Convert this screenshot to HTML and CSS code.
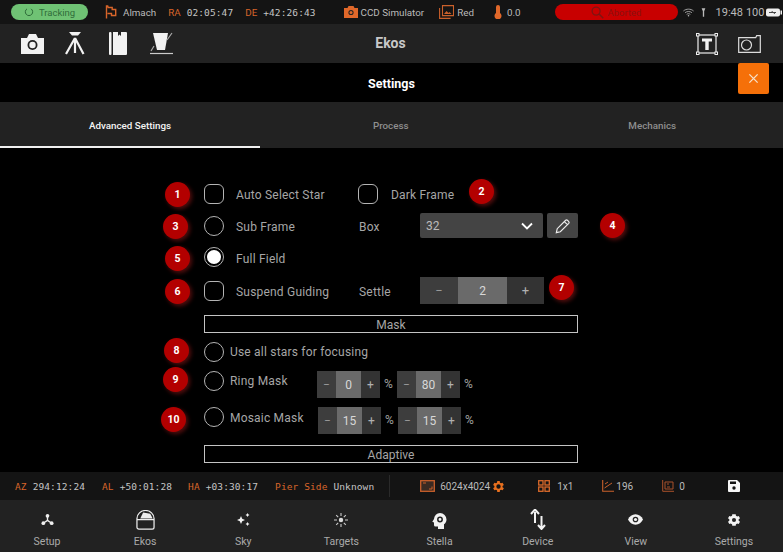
FILE: index.html
```html
<!DOCTYPE html>
<html lang="en">
	<head>
		<meta charset="UTF-8">
		<title>Ekos Settings</title>
		<link rel="stylesheet" href="styles.css">
	</head>
	<body>
		<div class="status-bar">
			<div class="pill pill-green">
				<svg class="pill-icon" viewBox="0 0 12 12"><path d="M3.600 2.200a4.400 4.400 0 1 0 4.800 0" fill="none" stroke="#2d6b38" stroke-width="1.200"/></svg>
				<span>Tracking</span>
			</div>
			<svg class="flag-icon" viewBox="0 0 12 14"><path d="M1.500 13.500V1h1.200l.5 1.500h4v2h3.500v6H6.500v-2H2.500" fill="none" stroke="#d8652a" stroke-width="1.400"/></svg>
			<span class="almach">Almach</span>
			<span class="key key-ra">RA</span><span class="mono val-ra">02:05:47</span>
			<span class="key key-de">DE</span><span class="mono">+42:26:43</span>
			<svg class="ccd-icon" viewBox="0 0 14 12"><path d="M0 2h3.500l1-2h5l1 2H14v10H0z" fill="#e0682a"/><circle cx="7" cy="6.500" r="2.600" fill="#222"/><circle cx="7" cy="6.500" r="1.500" fill="#e0682a"/></svg>
			<span class="ccd-name">CCD Simulator</span>
			<svg class="filter-icon" viewBox="0 0 15 14"><path d="M.6 3v10.400h11M3.500.6h11v10h-11z" fill="none" stroke="#c9602b" stroke-width="1.100"/><path d="M5 9l2.500-3 2 2 1-1 2 2z" fill="#c9602b"/></svg>
			<span class="filter-name">Red</span>
			<svg class="temp-icon" viewBox="0 0 8 14"><path d="M2 2a2 2 0 0 1 4 0v6a3.500 3.500 0 1 1-4 0z" fill="#e0682a"/></svg>
			<span class="temp">0.0</span>
			<div class="pill pill-red">
				<svg class="search-icon" viewBox="0 0 14 14"><circle cx="5.500" cy="5.500" r="4.300" fill="none" stroke="#7c1512" stroke-width="1.400"/><path d="M8.700 8.700l4.500 4.500" stroke="#7c1512" stroke-width="1.600"/></svg>
				<span>Aborted</span>
			</div>
			<svg class="wifi-icon" viewBox="0 0 12 9"><path d="M.5 2.800c3-2.600 8-2.600 11 0M2.300 4.700c2-1.700 5.400-1.700 7.400 0M4 6.500c1.100-.9 2.900-.9 4 0" fill="none" stroke="#bbb" stroke-width=".9"/><circle cx="6" cy="8" r=".8" fill="#bbb"/></svg>
			<svg class="signal-icon" viewBox="0 0 6 10"><path d="M.8 0h4.400L3.800 3.500V10H2.200V3.500z" fill="#bbb"/></svg>
			<span class="clock">19:48</span>
			<span class="batt-text">100</span>
			<svg class="battery-icon" viewBox="0 0 16 9"><rect width="14" height="8" y=".5" rx="2" fill="#eee"/><rect x="14.500" y="2.500" width="1.500" height="4" fill="#eee"/><path d="M3 4.500h7M6.500 3l-1 1.500M8 6l1-1.500" stroke="#333" stroke-width=".9"/></svg>
		</div>

		<div class="toolbar">
			<div class="toolbar-left">
				<svg class="tool-camera" viewBox="0 0 23 20"><path d="M0 4h6l2-4h7l2 4h6v16H0z" fill="#f2f2f2"/><circle cx="11.500" cy="11" r="5" fill="#222"/><circle cx="11.500" cy="11" r="3.200" fill="#f2f2f2"/></svg>
				<svg class="tool-mount" viewBox="0 0 20 23"><path d="M4 0h12l-3 3.500H7z" fill="#f2f2f2"/><path d="M10 6L1 22M10 6l8.500 16M10 6v15" stroke="#f2f2f2" stroke-width="2.200" fill="none"/></svg>
				<svg class="tool-book" viewBox="0 0 18 23"><rect width="2.500" height="23" rx="1" fill="#f2f2f2"/><path d="M4 0h5v4l1.500-1.500L12 4V0h5a1 1 0 0 1 1 1v21a1 1 0 0 1-1 1H4z" fill="#f2f2f2"/></svg>
				<svg class="tool-focus" viewBox="0 0 23 23"><path d="M3 1h15l-3 17H7z" fill="#f2f2f2"/><path d="M0 21.500h23" stroke="#ccc" stroke-width="1.200"/><path d="M1 19l3-5M17 8l5-7" stroke="#aaa" stroke-width="1.200"/></svg>
			</div>
			<div class="toolbar-title">Ekos</div>
			<div class="toolbar-right">
				<svg class="tool-text" viewBox="0 0 22 22"><rect x="2" y="2" width="18" height="18" fill="none" stroke="#eee" stroke-width="1.200"/><g fill="#222" stroke="#eee"><rect x=".5" y=".5" width="2.500" height="2.500"/><rect x="19" y=".5" width="2.500" height="2.500"/><rect x=".5" y="19" width="2.500" height="2.500"/><rect x="19" y="19" width="2.500" height="2.500"/></g><path d="M6 5.500h10v3h-3.300V17H9.300V8.500H6z" fill="#f2f2f2"/></svg>
				<svg class="tool-frame" viewBox="0 0 23 18"><path d="M.7 2.700h17l1-2h3.600v16.600H.7z" fill="none" stroke="#ddd" stroke-width="1.200"/><circle cx="8.500" cy="10" r="5" fill="none" stroke="#ddd" stroke-width="1.200"/></svg>
			</div>
		</div>

		<div class="settings-head">
			<span>Settings</span>
			<button class="close-btn">
				<svg viewBox="0 0 12 12"><path d="M1.500 1.500l9 9M10.500 1.500l-9 9" stroke="#f5dfc8" stroke-width="1.500"/></svg>
			</button>
		</div>

		<div class="tabs">
			<div class="tab tab-active">Advanced Settings</div>
			<div class="tab">Process</div>
			<div class="tab">Mechanics</div>
		</div>

		<div class="form">
			<div class="badge b1">1</div>
			<div class="badge b2">2</div>
			<div class="badge b3">3</div>
			<div class="badge b4">4</div>
			<div class="badge b5">5</div>
			<div class="badge b6">6</div>
			<div class="badge b7">7</div>
			<div class="badge b8">8</div>
			<div class="badge b9">9</div>
			<div class="badge b10">10</div>

			<div class="row row-1">
				<span class="check"></span>
				<span class="label col-a">Auto Select Star</span>
				<span class="check"></span>
				<span class="label dark-label">Dark Frame</span>
			</div>
			<div class="row row-2">
				<span class="radio"></span>
				<span class="label col-a">Sub Frame</span>
				<span class="label col-b">Box</span>
				<div class="select">
					<span>32</span>
					<svg viewBox="0 0 12 8"><path d="M1 1.500l5 5 5-5" fill="none" stroke="#fff" stroke-width="1.800"/></svg>
				</div>
				<button class="edit-btn">
					<svg viewBox="0 0 18 18"><path d="M1.500 16.500l1-4.500L12 2.500a1.500 1.500 0 0 1 2 0l1.500 1.500a1.500 1.500 0 0 1 0 2L6 15.500zM10.500 4l3.500 3.500" fill="none" stroke="#eee" stroke-width="1.300"/></svg>
				</button>
			</div>
			<div class="row row-3">
				<span class="radio radio-on"></span>
				<span class="label col-a">Full Field</span>
			</div>
			<div class="row row-4">
				<span class="check"></span>
				<span class="label col-a">Suspend Guiding</span>
				<span class="label col-b settle">Settle</span>
				<div class="stepper stepper-lg">
					<span class="step-minus">−</span><span class="step-val">2</span><span class="step-plus">+</span>
				</div>
			</div>

			<div class="section-box mask-box">Mask</div>

			<div class="row row-5">
				<span class="radio"></span>
				<span class="label col-c">Use all stars for focusing</span>
			</div>
			<div class="row row-6">
				<span class="radio"></span>
				<span class="label col-d">Ring Mask</span>
				<div class="stepper">
					<span class="step-minus">−</span><span class="step-val">0</span><span class="step-plus">+</span>
				</div>
				<span class="pct">%</span>
				<div class="stepper">
					<span class="step-minus">−</span><span class="step-val">80</span><span class="step-plus">+</span>
				</div>
				<span class="pct">%</span>
			</div>
			<div class="row row-7">
				<span class="radio"></span>
				<span class="label col-e">Mosaic Mask</span>
				<div class="stepper">
					<span class="step-minus">−</span><span class="step-val">15</span><span class="step-plus">+</span>
				</div>
				<span class="pct">%</span>
				<div class="stepper">
					<span class="step-minus">−</span><span class="step-val">15</span><span class="step-plus">+</span>
				</div>
				<span class="pct">%</span>
			</div>

			<div class="section-box adaptive-box">Adaptive</div>
		</div>

		<div class="info-bar">
			<span class="mono key i-az">AZ</span><span class="mono">294:12:24</span>
			<span class="mono key i-al">AL</span><span class="mono">+50:01:28</span>
			<span class="mono key i-ha">HA</span><span class="mono">+03:30:17</span>
			<span class="mono key i-pier">Pier Side</span><span class="mono">Unknown</span>
			<span class="divider"></span>
			<svg class="i-frame" viewBox="0 0 15 12"><rect x=".7" y=".7" width="13.600" height="10.600" fill="#3a2a22" stroke="#c9602b" stroke-width="1.300"/><path d="M9 9h3V6.500M3 3h3" stroke="#c9602b" fill="none"/></svg>
			<span class="i-size">6024x4024</span>
			<svg class="i-gear" viewBox="0 0 24 24"><path d="M19.400 13a7.500 7.500 0 0 0 0-2l2.100-1.600-2-3.500-2.500 1a7.500 7.500 0 0 0-1.700-1L15 3.200h-4l-.4 2.700a7.500 7.500 0 0 0-1.700 1l-2.500-1-2 3.500L6.500 11a7.500 7.500 0 0 0 0 2l-2.100 1.600 2 3.500 2.500-1a7.500 7.500 0 0 0 1.700 1l.4 2.700h4l.4-2.700a7.500 7.500 0 0 0 1.700-1l2.500 1 2-3.500zM13 15.500a3.500 3.500 0 1 1 0-7 3.500 3.500 0 0 1 0 7z" fill="#e8701f" transform="translate(-1 0)"/></svg>
			<svg class="i-bin" viewBox="0 0 12 12"><g fill="none" stroke="#d9692a" stroke-width="1.300"><rect x=".7" y=".7" width="4.300" height="4.300"/><rect x="7" y=".7" width="4.300" height="4.300"/><rect x=".7" y="7" width="4.300" height="4.300"/><rect x="7" y="7" width="4.300" height="4.300"/></g></svg>
			<span class="i-bin-text">1x1</span>
			<svg class="i-hfr" viewBox="0 0 12 12"><path d="M.7 0v11.300H12" fill="none" stroke="#c9602b" stroke-width="1.100"/><path d="M2.500 8L10 3M3 4l3-2" stroke="#c9602b"/></svg>
			<span class="i-hfr-text">196</span>
			<svg class="i-stars" viewBox="0 0 12 12"><path d="M.7 0v11.300H12M3 2h8v7H3z" fill="none" stroke="#a8502a"/><path d="M5 4h2M5 7h3" stroke="#a8502a"/></svg>
			<span class="i-stars-text">0</span>
			<svg class="i-save" viewBox="0 0 12 12"><path d="M0 1a1 1 0 0 1 1-1h8l3 3v8a1 1 0 0 1-1 1H1a1 1 0 0 1-1-1z" fill="#f5f5f5"/><rect x="2" y="1.500" width="6" height="2.500" fill="#111"/><circle cx="6" cy="8" r="1.700" fill="#111"/></svg>
		</div>

		<div class="nav">
			<div class="nav-item">
				<svg class="n-setup" viewBox="0 0 14 14"><circle cx="7" cy="3" r="2" fill="#eee"/><circle cx="2.500" cy="11" r="2" fill="#eee"/><circle cx="11.500" cy="11" r="2" fill="#eee"/><path d="M7 3v5l-4.500 3M7 8l4.500 3" stroke="#eee" stroke-width="1.500" fill="none"/></svg>
				<span>Setup</span>
			</div>
			<div class="nav-item">
				<svg class="n-ekos" viewBox="0 0 20 21"><path d="M1 10V9a9 8.500 0 0 1 18 0v1M1 10h18v8a2 2 0 0 1-2 2H3a2 2 0 0 1-2-2z" fill="none" stroke="#eee" stroke-width="1.300"/><path d="M4.500 9l3-6.500 7.500 1.500 2.500 5z" fill="#eee"/></svg>
				<span>Ekos</span>
			</div>
			<div class="nav-item">
				<svg class="n-sky" viewBox="0 0 15 13"><path d="M5 3l1.200 2.800L9 7 6.200 8.200 5 11 3.800 8.200 1 7l2.800-1.200zM11.500 0l.7 1.300 1.300.7-1.300.7-.7 1.300-.7-1.300L9.500 2l1.300-.7zM11.500 9l.7 1.300 1.300.7-1.300.7-.7 1.300-.7-1.300-1.300-.7 1.300-.7z" fill="#f2f2f2"/></svg>
				<span>Sky</span>
			</div>
			<div class="nav-item">
				<svg class="n-targets" viewBox="0 0 14 14"><circle cx="7" cy="7" r="2.200" fill="#ddd"/><path d="M7 0v3M7 11v3M0 7h3M11 7h3M2.200 2.200l2 2M9.800 9.800l2 2M11.800 2.200l-2 2M4.200 9.800l-2 2" stroke="#ccc" stroke-width="1.100"/></svg>
				<span>Targets</span>
			</div>
			<div class="nav-item">
				<svg class="n-stella" viewBox="0 0 15 16"><path d="M8 0a6.500 6.500 0 0 1 6.500 6.500c0 2.200-1 3.700-2.500 4.800V16H6v-2.500H3.500a1.500 1.500 0 0 1-1.500-1.500V9.500L.3 8.700 2 6A6.300 6.300 0 0 1 8 0z" fill="#f2f2f2"/><circle cx="8" cy="6.500" r="2.200" fill="none" stroke="#222" stroke-width="1.500"/></svg>
				<span>Stella</span>
			</div>
			<div class="nav-item">
				<svg class="n-device" viewBox="0 0 16 21"><path d="M5 14V3M1 5l4-4.500L9 5" fill="none" stroke="#f2f2f2" stroke-width="2"/><path d="M11.500 7v12M8 16l3.500 4 3.500-4" fill="none" stroke="#f2f2f2" stroke-width="2"/></svg>
				<span>Device</span>
			</div>
			<div class="nav-item">
				<svg class="n-view" viewBox="0 0 16 11"><path d="M8 0c3.600 0 6.500 2.300 8 5.500C14.500 8.700 11.600 11 8 11S1.500 8.700 0 5.500C1.500 2.300 4.400 0 8 0z" fill="#f2f2f2"/><circle cx="8" cy="5.500" r="3" fill="#222"/><circle cx="8" cy="5.500" r="1.700" fill="#f2f2f2"/></svg>
				<span>View</span>
			</div>
			<div class="nav-item">
				<svg class="n-settings" viewBox="0 0 24 24"><path d="M20 13.200a8 8 0 0 0 0-2.400l2.300-1.800-2.300-4-2.700 1.100a8 8 0 0 0-2-1.200L15 2h-6l-.3 2.900a8 8 0 0 0-2 1.200L4 5 1.700 9 4 10.800a8 8 0 0 0 0 2.400L1.700 15 4 19l2.700-1.100a8 8 0 0 0 2 1.200L9 22h6l.3-2.900a8 8 0 0 0 2-1.200L20 19l2.300-4zM12 15.500a3.500 3.500 0 1 1 0-7 3.500 3.500 0 0 1 0 7z" fill="#f2f2f2"/></svg>
				<span>Settings</span>
			</div>
		</div>
	</body>
</html>
```

FILE: styles.css
```css
html, body {
	margin: 0;
	padding: 0;
}

body {
	width: 783px;
	height: 552px;
	overflow: hidden;
	background-color: #000;
	color: #bbb;
	font-family: Roboto, 'Noto Sans', sans-serif;
	font-size: 12px;
}

svg {
	display: block;
	flex: none;
}

button {
	border: none;
	padding: 0;
}

.mono {
	flex: none;
	font-family: 'DejaVu Sans Mono', monospace;
	font-size: 9.5px;
	letter-spacing: 0.1px;
	color: #c4c4c4;
}

.key {
	color: #d8652a;
}

/* top status bar */
.status-bar {
	display: flex;
	align-items: center;
	height: 24px;
	background-color: #141414;
	font-size: 9.8px;
	color: #bbb;
	white-space: nowrap;
}

.pill {
	display: flex;
	flex: none;
	align-items: center;
	justify-content: center;
	height: 16px;
	border-radius: 8px;
}

.pill-green {
	width: 77px;
	margin-left: 11px;
	gap: 5px;
	background-color: #6fc274;
	color: #2f6d3a;
	font-size: 9.5px;
}

.pill-icon {
	width: 10px;
	height: 10px;
}

.flag-icon {
	width: 12px;
	height: 14px;
	margin-left: 17px;
}

.almach {
	margin-left: 6px;
}

.key-ra {
	margin-left: 12px;
	color: #d8652a;
}

.val-ra {
	margin-left: 6px;
}

.key-de {
	margin-left: 12px;
	color: #d8652a;
}

.key-de + .mono {
	margin-left: 6px;
}

.ccd-icon {
	width: 14px;
	height: 12px;
	margin-left: 28px;
}

.ccd-name {
	margin-left: 3px;
}

.filter-icon {
	width: 15px;
	height: 14px;
	margin-left: 15px;
}

.filter-name {
	margin-left: 3px;
}

.temp-icon {
	width: 8px;
	height: 14px;
	margin-left: 20px;
}

.temp {
	margin-left: 5px;
}

.pill-red {
	width: 123px;
	margin-left: 34px;
	gap: 4px;
	background-color: #c80000;
	color: #8a1010;
	font-size: 9.5px;
}

.search-icon {
	width: 13px;
	height: 13px;
}

.wifi-icon {
	width: 11px;
	height: 9px;
	margin-left: 5px;
}

.signal-icon {
	width: 5px;
	height: 9px;
	margin-left: 7px;
}

.clock {
	margin-left: 10px;
	font-size: 11px;
}

.batt-text {
	margin-left: 3px;
	font-size: 11px;
}

.battery-icon {
	width: 16px;
	height: 9px;
	margin-left: 2px;
}

/* ekos toolbar */
.toolbar {
	display: flex;
	align-items: center;
	justify-content: space-between;
	position: relative;
	height: 39px;
	background-color: #222;
}

.toolbar-left {
	display: flex;
	align-items: center;
	margin-left: 21px;
}

.tool-camera {
	width: 23px;
	height: 20px;
}

.tool-mount {
	width: 20px;
	height: 23px;
	margin-left: 21px;
}

.tool-book {
	width: 18px;
	height: 23px;
	margin-left: 24px;
}

.tool-focus {
	width: 23px;
	height: 23px;
	margin-left: 23px;
}

.toolbar-title {
	position: absolute;
	left: 0;
	right: 2px;
	bottom: 12px;
	text-align: center;
	font-size: 14px;
	font-weight: 700;
	color: #c8c8c8;
}

.toolbar-right {
	display: flex;
	align-items: center;
	margin-right: 22px;
}

.tool-text {
	width: 22px;
	height: 22px;
}

.tool-frame {
	width: 23px;
	height: 18px;
	margin-left: 20px;
}

/* settings header */
.settings-head {
	display: flex;
	align-items: center;
	justify-content: center;
	position: relative;
	box-sizing: border-box;
	height: 39px;
	padding-top: 1px;
	color: #fff;
	font-size: 12.5px;
	font-weight: 700;
}

.close-btn {
	display: flex;
	align-items: center;
	justify-content: center;
	position: absolute;
	top: 0;
	right: 14px;
	width: 31px;
	height: 31px;
	border-radius: 2px;
	background-color: #f57009;
}

.close-btn svg {
	width: 11px;
	height: 11px;
}

/* tabs */
.tabs {
	display: flex;
	height: 46px;
	background-color: #222;
}

.tab {
	flex: 1;
	display: flex;
	align-items: center;
	justify-content: center;
	padding-top: 2px;
	border-bottom: 2px solid transparent;
	box-sizing: border-box;
	font-size: 9.8px;
	font-weight: 500;
	color: #8f8f8f;
}

.tab-active {
	flex: none;
	width: 260px;
	color: #f4f4f4;
	border-bottom-color: #f0f0f0;
}

/* form */
.form {
	position: relative;
	height: 324px;
	box-sizing: border-box;
	padding: 36px 0 0 204px;
	overflow: hidden;
}

.row {
	display: flex;
	align-items: center;
}

.label {
	font-size: 12px;
	color: #a6a6a6;
	letter-spacing: 0.2px;
}

.check, .radio {
	flex: none;
	box-sizing: border-box;
	width: 20px;
	height: 20px;
	border: 1px solid #b4b4b4;
}

.check {
	border-radius: 6px;
}

.radio {
	border-radius: 50%;
}

.radio-on {
	display: flex;
	align-items: center;
	justify-content: center;
}

.radio-on::before {
	content: "";
	width: 14px;
	height: 14px;
	border-radius: 50%;
	background-color: #fff;
}

.col-a {
	width: 122px;
	margin-left: 12px;
}

.dark-label {
	margin-left: 13px;
}

.col-b {
	width: 61px;
	margin-left: 1px;
}

.col-c {
	margin-left: 6px;
}

.col-d {
	width: 87px;
	margin-left: 6px;
}

.col-e {
	width: 88px;
	margin-left: 6px;
}

.row-1 {
	height: 20px;
}

.row-1 .label {
	margin-top: 2px;
}

.row-2 {
	height: 25px;
	margin-top: 9px;
}

.row-2 .label {
	margin-top: 2px;
}

.row-3 {
	height: 20px;
	margin-top: 9px;
}

.row-3 .label {
	margin-top: 3px;
}

.row-4 {
	height: 27px;
	margin-top: 10px;
}

.row-4 .label {
	margin-top: 3px;
}

.select {
	display: flex;
	flex: none;
	align-items: center;
	justify-content: space-between;
	box-sizing: border-box;
	width: 123px;
	height: 25px;
	padding: 0 10px 0 6px;
	border-radius: 2px;
	background-color: #444;
	color: #bbb;
	font-size: 12px;
}

.select svg {
	width: 12px;
	height: 8px;
}

.edit-btn {
	display: flex;
	flex: none;
	align-items: center;
	justify-content: center;
	width: 31px;
	height: 25px;
	margin-left: 4px;
	border-radius: 2px;
	background-color: #444;
}

.edit-btn svg {
	width: 16px;
	height: 16px;
}

.stepper {
	display: flex;
	flex: none;
	width: 63px;
	height: 27px;
	font-size: 12px;
	color: #c8c8c8;
}

.stepper span {
	display: flex;
	align-items: center;
	justify-content: center;
}

.step-minus {
	width: 19px;
	background-color: #3d3d3d;
	color: #999;
}

.step-val {
	width: 25px;
	background-color: #6a6a6a;
	color: #d8d8d8;
}

.step-plus {
	width: 19px;
	background-color: #333;
	color: #b0b0b0;
}

.stepper-lg {
	width: 124px;
	font-size: 13px;
}

.stepper-lg .step-minus {
	width: 38px;
}

.stepper-lg .step-val {
	width: 49px;
	font-size: 12px;
}

.stepper-lg .step-plus {
	width: 37px;
}

.pct {
	width: 17px;
	text-align: center;
	font-size: 12px;
	color: #a0a0a0;
}

.section-box {
	box-sizing: border-box;
	width: 374px;
	height: 18px;
	border: 1px solid #c4c4c4;
	text-align: center;
	line-height: 18px;
	font-size: 12px;
	color: #a6a6a6;
}

.mask-box {
	margin-top: 11px;
}

.row-5 {
	height: 20px;
	margin-top: 9px;
}

.row-6 {
	height: 27px;
	margin-top: 9px;
	align-items: flex-start;
}

.row-6 .label {
	margin-top: 3px;
}

.row-6 .pct, .row-7 .pct {
	line-height: 27px;
}

.row-7 {
	height: 27px;
	margin-top: 9px;
	align-items: flex-start;
}

.row-7 .label {
	margin-top: 4px;
}

.adaptive-box {
	margin-top: 11px;
}

/* numbered red markers */
.badge {
	position: absolute;
	display: flex;
	align-items: center;
	justify-content: center;
	width: 25px;
	height: 25px;
	border-radius: 50%;
	background-color: #b30000;
	box-shadow: 2px 2px 4px rgba(120, 20, 20, 0.7);
	color: #fff;
	font-size: 10.5px;
	font-weight: 700;
}

.b1 { left: 165px; top: 34px; }
.b2 { left: 469px; top: 31px; }
.b3 { left: 163px; top: 66px; }
.b4 { left: 600px; top: 65px; }
.b5 { left: 165px; top: 98px; }
.b6 { left: 165px; top: 131px; }
.b7 { left: 549px; top: 127px; }
.b8 { left: 164px; top: 190px; }
.b9 { left: 163px; top: 219px; }
.b10 { left: 161px; top: 259px; }

/* bottom info bar */
.info-bar {
	display: flex;
	align-items: center;
	height: 28px;
	background-color: #141414;
	font-size: 10px;
	color: #bbb;
	white-space: nowrap;
}

.i-az {
	margin-left: 15px;
	margin-right: 6px;
}

.i-al {
	margin-left: 17px;
	margin-right: 6px;
}

.i-ha {
	margin-left: 16px;
	margin-right: 6px;
}

.i-pier {
	margin-left: 17px;
	margin-right: 6px;
}

.divider {
	flex: none;
	width: 1px;
	height: 22px;
	margin-left: 15px;
	background-color: #2a2a2a;
}

.i-frame {
	width: 15px;
	height: 12px;
	margin-left: 30px;
}

.i-size {
	margin-left: 5px;
}

.i-gear {
	width: 15px;
	height: 15px;
	margin-left: 1px;
}

.i-bin {
	width: 12px;
	height: 12px;
	margin-left: 32px;
}

.i-bin-text {
	margin-left: 7px;
}

.i-hfr {
	width: 12px;
	height: 12px;
	margin-left: 29px;
}

.i-hfr-text {
	margin-left: 2px;
}

.i-stars {
	width: 12px;
	height: 12px;
	margin-left: 29px;
}

.i-stars-text {
	margin-left: 5px;
}

.i-save {
	width: 12px;
	height: 12px;
	margin-left: 43px;
}

/* bottom navigation */
.nav {
	display: flex;
	width: 785px;
	height: 52px;
	margin-left: -2px;
	background-color: #222;
}

.nav-item {
	flex: 1;
	display: flex;
	flex-direction: column;
	align-items: center;
	justify-content: flex-end;
	gap: 5px;
	padding-bottom: 4px;
	font-size: 10.5px;
	color: #aaa;
}

.n-setup { width: 13px; height: 13px; margin-bottom: 4px; }
.n-ekos { width: 19px; height: 20px; }
.n-sky { width: 15px; height: 13px; margin-bottom: 4px; }
.n-targets { width: 14px; height: 14px; margin-bottom: 3px; }
.n-stella { width: 15px; height: 16px; margin-bottom: 1px; }
.n-device { width: 16px; height: 21px; }
.n-view { width: 15px; height: 11px; margin-bottom: 5px; }
.n-settings { width: 14px; height: 14px; margin-bottom: 3px; }
```
